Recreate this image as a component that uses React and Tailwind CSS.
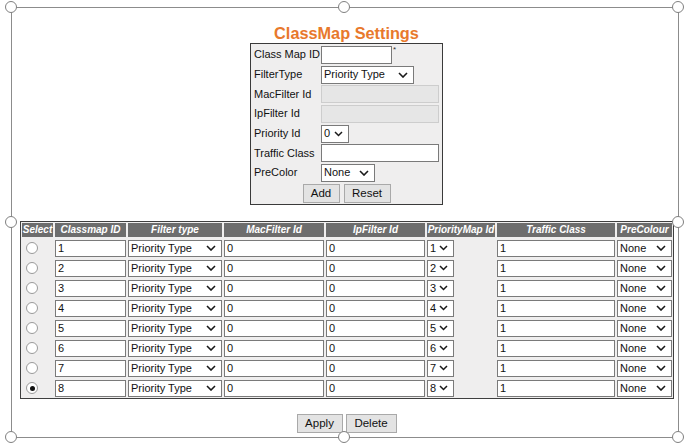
import React from "react";

const FONT = { fontFamily: '"Liberation Sans", Arial, sans-serif' };

function Chevron({ small }) {
  return small ? (
    <svg width="9" height="6" viewBox="0 0 9 6" className="shrink-0">
      <path d="M1 1 L4.5 4.5 L8 1" fill="none" stroke="#1a1a1a" strokeWidth="1.5" />
    </svg>
  ) : (
    <svg width="10" height="6" viewBox="0 0 10 6" className="shrink-0">
      <path d="M1 1 L5 5 L9 1" fill="none" stroke="#1a1a1a" strokeWidth="1.6" />
    </svg>
  );
}

function Sel({ text, cls, small }) {
  return (
    <div
      className={`flex items-center justify-between border border-[#7a7a7a] bg-white pl-[2px] pr-[5px] text-[11px] leading-none text-[#111] ${cls}`}
    >
      <span>{text}</span>
      <Chevron small={small} />
    </div>
  );
}

function Inp({ v, cls }) {
  return (
    <div
      className={`flex items-center border border-[#7a7a7a] bg-white pl-[2px] text-[11px] leading-none text-[#111] ${cls}`}
    >
      {v}
    </div>
  );
}

function Handle({ cls }) {
  return (
    <div
      className={`absolute w-[12px] h-[12px] rounded-full border-[1.5px] border-[#808080] bg-white ${cls}`}
    />
  );
}

function Btn({ children, cls }) {
  return (
    <div
      className={`flex items-center justify-center border border-[#a9a9a9] bg-[#e3e3e3] text-[11.5px] leading-none text-[#111] ${cls}`}
    >
      {children}
    </div>
  );
}

function Radio({ on }) {
  return (
    <div className="flex items-center pl-[4px]">
      <div className="flex items-center justify-center w-[12px] h-[12px] rounded-full border border-[#9a9a9a] bg-white">
        {on && <div className="w-[5px] h-[5px] rounded-full bg-[#111]" />}
      </div>
    </div>
  );
}

const COLS = "grid grid-cols-[31px_71px_94px_100px_99px_68px_118px_55px] gap-x-[2px]";

export default function App() {
  const rows = [1, 2, 3, 4, 5, 6, 7, 8];
  const headers = [
    "Select",
    "Classmap ID",
    "Filter type",
    "MacFilter Id",
    "IpFilter Id",
    "PriorityMap Id",
    "Traffic Class",
    "PreColour",
  ];
  return (
    <div className="relative w-[687px] h-[444px] bg-white overflow-hidden" style={FONT}>
      <div className="ml-[11px] mt-[7px] w-[668px] h-[431px] border border-[#8c8c8c]">
        {/* Title */}
        <div className="mt-[16px] pl-[3px] text-center text-[16.3px] leading-[18px] font-bold text-[#e8792c]">
          ClassMap Settings
        </div>

        {/* Form box */}
        <div className="ml-[238px] mt-[1px] w-[193px] h-[162px] border border-[#3a3a3a] bg-[#efeeee] pl-[3px] pt-[1px]">
          <div className="grid grid-cols-[67px_1fr] auto-rows-[19.7px] items-center text-[11px] leading-none text-[#111]">
            <span>Class Map ID</span>
            <div className="flex items-start">
              <Inp v="" cls="w-[71px] h-[18px]" />
              <span className="ml-[1px] text-[8px] leading-none text-[#333]">*</span>
            </div>
            <span>FilterType</span>
            <Sel text="Priority Type" cls="w-[93px] h-[18px]" />
            <span>MacFilter Id</span>
            <div className="w-[118px] h-[18px] border border-[#cdcdcd] bg-[#e6e6e6]" />
            <span>IpFilter Id</span>
            <div className="w-[118px] h-[18px] border border-[#cdcdcd] bg-[#e6e6e6]" />
            <span>Priority Id</span>
            <Sel text="0" small cls="w-[28px] h-[18px] pr-[4px]" />
            <span>Traffic Class</span>
            <Inp v="" cls="w-[118px] h-[18px]" />
            <span>PreColor</span>
            <Sel text="None" cls="w-[54px] h-[18px]" />
          </div>
          <div className="mt-[1px] flex justify-center gap-[4px] pr-[3px]">
            <Btn cls="w-[37px] h-[19px]">Add</Btn>
            <Btn cls="w-[47px] h-[19px]">Reset</Btn>
          </div>
        </div>

        {/* Table */}
        <div className="ml-[8px] mt-[16px] w-[654px] border border-[#3f3f3f] bg-[#efeeee] p-[1px]">
          <div className={`${COLS} h-[14px]`}>
            {headers.map((h) => (
              <div
                key={h}
                className="flex items-center justify-center bg-[#6d6d6d] text-white text-[10px] leading-none font-bold italic whitespace-nowrap"
              >
                {h}
              </div>
            ))}
          </div>
          <div className="mt-[2px] flex flex-col gap-y-[2px]">
            {rows.map((i) => (
              <div key={i} className={`${COLS} h-[18px] items-center`}>
                <Radio on={i === 8} />
                <Inp v={String(i)} cls="h-[17px]" />
                <Sel text="Priority Type" cls="h-[17px]" />
                <Inp v="0" cls="h-[17px]" />
                <Inp v="0" cls="h-[17px]" />
                <div>
                  <Sel text={String(i)} small cls="w-[27px] h-[17px] pr-[4px]" />
                </div>
                <Inp v="1" cls="h-[17px]" />
                <Sel text="None" cls="h-[17px]" />
              </div>
            ))}
          </div>
        </div>

        {/* Bottom buttons */}
        <div className="mt-[15px] flex justify-center gap-[3px] pl-[3px]">
          <Btn cls="w-[46px] h-[19px]">Apply</Btn>
          <Btn cls="w-[51px] h-[19px]">Delete</Btn>
        </div>
      </div>

      {/* selection handles */}
      <Handle cls="left-[5px] top-[1px]" />
      <Handle cls="left-[338px] top-[1px]" />
      <Handle cls="left-[672px] top-[1px]" />
      <Handle cls="left-[5px] top-[216px]" />
      <Handle cls="left-[672px] top-[216px]" />
      <Handle cls="left-[5px] top-[431px]" />
      <Handle cls="left-[338px] top-[431px]" />
      <Handle cls="left-[672px] top-[431px]" />
    </div>
  );
}
